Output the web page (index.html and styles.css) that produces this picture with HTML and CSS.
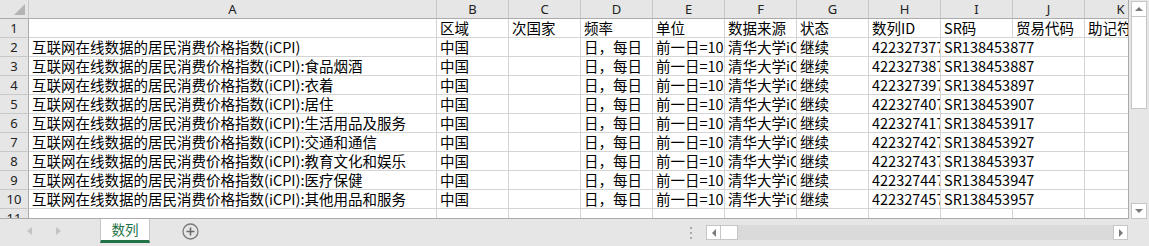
FILE: index.html
```html
<!DOCTYPE html>
<html lang="zh-CN">
<head>
<meta charset="utf-8">
<title>数列</title>
<link rel="stylesheet" href="styles.css">
</head>
<body>
<div class="app">
  <div class="main">
    <div class="sheet">
      <div class="row head">
        <div class="c corner"><span class="tri"></span></div>
        <div class="c">A</div><div class="c">B</div><div class="c">C</div><div class="c">D</div><div class="c">E</div><div class="c">F</div><div class="c">G</div><div class="c">H</div><div class="c">I</div><div class="c">J</div><div class="c">K</div>
      </div>
      <div class="row">
        <div class="c rh">1</div>
        <div class="c"></div><div class="c">区域</div><div class="c">次国家</div><div class="c">频率</div><div class="c">单位</div><div class="c">数据来源</div><div class="c">状态</div><div class="c">数列ID</div><div class="c">SR码</div><div class="c">贸易代码</div><div class="c">助记符</div>
      </div>
      <div class="row">
        <div class="c rh">2</div>
        <div class="c">互联网在线数据的居民消费价格指数(iCPI)</div><div class="c">中国</div><div class="c"></div><div class="c">日，每日</div><div class="c">前一日=100</div><div class="c">清华大学iCPI</div><div class="c">继续</div><div class="c">422327377</div><div class="c ov">SR138453877</div><div class="c"></div><div class="c"></div>
      </div>
      <div class="row">
        <div class="c rh">3</div>
        <div class="c">互联网在线数据的居民消费价格指数(iCPI):食品烟酒</div><div class="c">中国</div><div class="c"></div><div class="c">日，每日</div><div class="c">前一日=100</div><div class="c">清华大学iCPI</div><div class="c">继续</div><div class="c">422327387</div><div class="c ov">SR138453887</div><div class="c"></div><div class="c"></div>
      </div>
      <div class="row">
        <div class="c rh">4</div>
        <div class="c">互联网在线数据的居民消费价格指数(iCPI):衣着</div><div class="c">中国</div><div class="c"></div><div class="c">日，每日</div><div class="c">前一日=100</div><div class="c">清华大学iCPI</div><div class="c">继续</div><div class="c">422327397</div><div class="c ov">SR138453897</div><div class="c"></div><div class="c"></div>
      </div>
      <div class="row">
        <div class="c rh">5</div>
        <div class="c">互联网在线数据的居民消费价格指数(iCPI):居住</div><div class="c">中国</div><div class="c"></div><div class="c">日，每日</div><div class="c">前一日=100</div><div class="c">清华大学iCPI</div><div class="c">继续</div><div class="c">422327407</div><div class="c ov">SR138453907</div><div class="c"></div><div class="c"></div>
      </div>
      <div class="row">
        <div class="c rh">6</div>
        <div class="c">互联网在线数据的居民消费价格指数(iCPI):生活用品及服务</div><div class="c">中国</div><div class="c"></div><div class="c">日，每日</div><div class="c">前一日=100</div><div class="c">清华大学iCPI</div><div class="c">继续</div><div class="c">422327417</div><div class="c ov">SR138453917</div><div class="c"></div><div class="c"></div>
      </div>
      <div class="row">
        <div class="c rh">7</div>
        <div class="c">互联网在线数据的居民消费价格指数(iCPI):交通和通信</div><div class="c">中国</div><div class="c"></div><div class="c">日，每日</div><div class="c">前一日=100</div><div class="c">清华大学iCPI</div><div class="c">继续</div><div class="c">422327427</div><div class="c ov">SR138453927</div><div class="c"></div><div class="c"></div>
      </div>
      <div class="row">
        <div class="c rh">8</div>
        <div class="c">互联网在线数据的居民消费价格指数(iCPI):教育文化和娱乐</div><div class="c">中国</div><div class="c"></div><div class="c">日，每日</div><div class="c">前一日=100</div><div class="c">清华大学iCPI</div><div class="c">继续</div><div class="c">422327437</div><div class="c ov">SR138453937</div><div class="c"></div><div class="c"></div>
      </div>
      <div class="row">
        <div class="c rh">9</div>
        <div class="c">互联网在线数据的居民消费价格指数(iCPI):医疗保健</div><div class="c">中国</div><div class="c"></div><div class="c">日，每日</div><div class="c">前一日=100</div><div class="c">清华大学iCPI</div><div class="c">继续</div><div class="c">422327447</div><div class="c ov">SR138453947</div><div class="c"></div><div class="c"></div>
      </div>
      <div class="row">
        <div class="c rh">10</div>
        <div class="c">互联网在线数据的居民消费价格指数(iCPI):其他用品和服务</div><div class="c">中国</div><div class="c"></div><div class="c">日，每日</div><div class="c">前一日=100</div><div class="c">清华大学iCPI</div><div class="c">继续</div><div class="c">422327457</div><div class="c ov">SR138453957</div><div class="c"></div><div class="c"></div>
      </div>
      <div class="row">
        <div class="c rh">11</div>
        <div class="c"></div><div class="c"></div><div class="c"></div><div class="c"></div><div class="c"></div><div class="c"></div><div class="c"></div><div class="c"></div><div class="c"></div><div class="c"></div><div class="c"></div>
      </div>
    </div>
    <div class="vscroll">
      <div class="sbtn up"><span class="arr-up"></span></div>
      <div class="vthumb"></div>
      <div class="vtrack"></div>
      <div class="sbtn down"><span class="arr-down"></span></div>
    </div>
  </div>
  <div class="bar">
    <div class="nav"><span class="arr-l"></span><span class="arr-r"></span></div>
    <div class="tab">数列</div>
    <div class="add">
      <svg width="17" height="17" viewBox="0 0 17 17"><circle cx="8.5" cy="8.5" r="7.5" fill="none" stroke="#7a7a7a" stroke-width="1.3"/><path d="M8.5 4.5v8M4.5 8.5h8" stroke="#6a6a6a" stroke-width="1.6"/></svg>
    </div>
    <div class="spacer"></div>
    <div class="dots"><i></i><i></i><i></i></div>
    <div class="hscroll">
      <div class="sbtn hb"><span class="arr-hl"></span></div>
      <div class="hthumb"></div>
      <div class="htrack"></div>
      <div class="sbtn hb"><span class="arr-hr"></span></div>
    </div>
  </div>
</div>
</body>
</html>
```
FILE: styles.css
```css
* { box-sizing: border-box; margin: 0; padding: 0; }
body { margin: 0; background: #e6e6e6; }
.app { width: 1149px; height: 246px; display: flex; flex-direction: column; overflow: hidden; background: #e6e6e6; }
.main { display: flex; height: 219px; }
.sheet { width: 1129px; height: 219px; overflow: hidden; background: #fff; border-right: 1px solid #ababab; border-bottom: 1px solid #ababab; }
.row { display: grid; grid-template-columns: 29px 408px repeat(9, 72px) 72px; height: 19px; width: max-content; }
.c { height: 19px; border-right: 1px solid #d4d4d4; border-bottom: 1px solid #d4d4d4; white-space: nowrap; overflow: hidden; padding-left: 3px; font-family: "Noto Sans CJK SC", sans-serif; font-size: 14.5px; line-height: 18px; color: #000; }
.c.ov { overflow: visible; border-right-color: transparent; position: relative; z-index: 1; }
.head { height: 19px; }
.head .c { background: #e6e6e6; border-right-color: #c8c8c8; border-bottom-color: #ababab; text-align: center; padding-left: 0; font-family: "Noto Sans", "Liberation Sans", sans-serif; font-size: 13px; color: #222; line-height: 18px; }
.corner { position: relative; }
.tri { position: absolute; right: 3px; bottom: 3px; width: 0; height: 0; border-left: 11px solid transparent; border-bottom: 11px solid #b4b4b4; }
.c.rh { background: #e6e6e6; border-right-color: #ababab; border-bottom-color: #c8c8c8; text-align: center; padding-left: 0; font-family: "Noto Sans", "Liberation Sans", sans-serif; font-size: 13px; color: #222; }
.vscroll { flex: 1; display: flex; flex-direction: column; align-items: flex-start; padding: 1px 0 0 2px; }
.sbtn { width: 16px; height: 16px; background: #fff; border: 1px solid #c6c6c6; display: flex; align-items: center; justify-content: center; flex: none; }
.vthumb { width: 16px; height: 92px; background: #fff; border: 1px solid #c6c6c6; border-top: none; }
.vtrack { flex: 1; }
.sbtn.down { height: 16px; }
.arr-up { width: 0; height: 0; border-left: 4px solid transparent; border-right: 4px solid transparent; border-bottom: 4px solid #7a7a7a; }
.arr-down { width: 0; height: 0; border-left: 4px solid transparent; border-right: 4px solid transparent; border-top: 4px solid #7a7a7a; }
.bar { height: 27px; display: flex; align-items: flex-start; }
.nav { width: 100px; height: 24px; display: flex; align-items: center; padding-left: 27px; gap: 24px; }
.arr-l { width: 0; height: 0; border-top: 4.5px solid transparent; border-bottom: 4.5px solid transparent; border-right: 5px solid #c4c4c4; }
.arr-r { width: 0; height: 0; border-top: 4.5px solid transparent; border-bottom: 4.5px solid transparent; border-left: 5px solid #c4c4c4; }
.tab { width: 50px; height: 24px; background: #fff; border-left: 1px solid #c6c6c6; border-right: 1px solid #c6c6c6; border-bottom: 3px solid #217346; color: #217346; font-family: "Noto Sans CJK SC", sans-serif; font-size: 13.5px; line-height: 21px; text-align: center; }
.add { margin-left: 32px; margin-top: 4px; width: 17px; height: 17px; }
.add svg { display: block; }
.spacer { flex: 1; }
.dots { display: flex; flex-direction: column; gap: 3px; margin-top: 8px; margin-right: 14px; }
.dots i { display: block; width: 2px; height: 2px; background: #a8a8a8; }
.hscroll { width: 422px; height: 15px; margin-top: 6px; margin-right: 21px; display: flex; background: #dadada; }
.sbtn.hb { width: 15px; height: 15px; }
.hthumb { width: 17px; height: 15px; background: #fff; border: 1px solid #c6c6c6; border-left: none; }
.htrack { flex: 1; }
.arr-hl { width: 0; height: 0; border-top: 4px solid transparent; border-bottom: 4px solid transparent; border-right: 4px solid #7a7a7a; }
.arr-hr { width: 0; height: 0; border-top: 4px solid transparent; border-bottom: 4px solid transparent; border-left: 4px solid #7a7a7a; }
```
